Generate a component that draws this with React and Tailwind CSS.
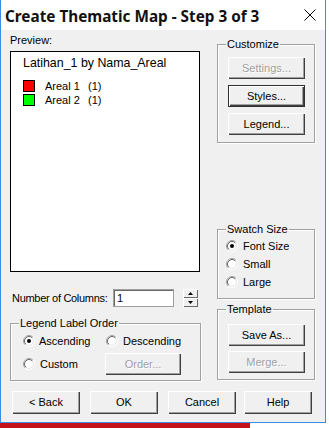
import React from "react";

const btnBase =
  "flex items-center justify-center h-[22px] bg-[#f0f0f0] text-[11px] leading-[13px] shadow-[inset_1px_1px_0_#ffffff,inset_-1px_-1px_0_#404040,inset_-2px_-2px_0_#a0a0a0]";
const disabledText = "text-[#a0a0a0] [text-shadow:1px_1px_0_#ffffff]";

function Btn({ children, disabled, className = "", def }) {
  return (
    <div
      className={`${btnBase} ${def ? "border border-[#303030]" : ""} ${className} ${
        disabled ? disabledText : "text-black"
      }`}
    >
      {children}
    </div>
  );
}

function Radio({ checked }) {
  return (
    <svg width="12" height="12" viewBox="0 0 12 12" className="shrink-0">
      <circle cx="6" cy="6" r="5.5" fill="#ffffff" stroke="#ffffff" />
      <circle cx="6" cy="6" r="4.5" fill="#ffffff" stroke="#e3e3e3" />
      <path d="M2.11 9.89 A5.5 5.5 0 0 1 9.89 2.11" fill="none" stroke="#a0a0a0" />
      <path d="M2.82 9.18 A4.5 4.5 0 0 1 9.18 2.82" fill="none" stroke="#696969" />
      {checked && <circle cx="6" cy="6" r="2" fill="#000000" />}
    </svg>
  );
}

function Group({ label, labelMl = "ml-[8px]", className = "", children }) {
  return (
    <div
      className={`flex flex-col border border-[#a0a0a0] shadow-[inset_1px_1px_0_#ffffff,1px_1px_0_#ffffff] ${className}`}
    >
      <span
        className={`-mt-[7px] ${labelMl} w-fit bg-[#f0f0f0] px-[1px] text-[11px] leading-[13px] text-black`}
      >
        {label}
      </span>
      {children}
    </div>
  );
}

export default function App() {
  return (
    <div className="w-[329px] h-[428px] bg-white font-['Liberation_Sans',Arial,sans-serif] overflow-hidden">
      <div className="w-[326px] h-[423px] flex flex-col border-l border-r border-b border-[#3b8de0]">
        {/* title bar */}
        <div className="h-[30px] bg-white flex items-center pl-[4px] pr-[9px]">
          <span className="font-['Noto_Sans',sans-serif] font-bold text-[15.3px] leading-[20px] text-[#111] mt-[1px]">
            Create Thematic Map - Step 3 of 3
          </span>
          <svg width="12" height="12" viewBox="0 0 12 12" className="ml-auto">
            <path d="M0.5 0.5 L11.5 11.5 M11.5 0.5 L0.5 11.5" stroke="#000" strokeWidth="1" />
          </svg>
        </div>

        {/* body */}
        <div className="flex-1 bg-[#f0f0f0] pl-[9px] flex flex-col">
          <div className="flex">
            {/* left column */}
            <div className="w-[191px] flex flex-col">
              <span className="mt-[4px] h-[13px] text-[11px] leading-[13px] text-black">Preview:</span>
              <div className="mt-[4px] w-[190px] h-[221px] bg-white border border-black flex flex-col">
                <span className="mt-[4px] pl-[12px] text-[12.4px] leading-[15px] text-black">
                  Latihan_1 by Nama_Areal
                </span>
                <div className="mt-[8px] pl-[12px] flex flex-col">
                  {[
                    ["bg-[#ff0000]", "Areal 1"],
                    ["bg-[#00ff00]", "Areal 2"],
                  ].map(([c, t]) => (
                    <div key={t} className="h-[14px] flex items-center text-[11px] leading-[13px] text-black">
                      <div className={`w-[12px] h-[12px] border border-black ${c}`} />
                      <span className="ml-[10px] w-[43px]">{t}</span>
                      <span>(1)</span>
                    </div>
                  ))}
                </div>
              </div>

              {/* number of columns */}
              <div className="mt-[17px] h-[18px] flex items-center">
                <span className="ml-[2px] w-[101px] text-[11px] leading-[13px] tracking-[-0.3px] text-black">
                  Number of Columns:
                </span>
                <div className="w-[61px] h-[18px] bg-white border border-[#a0a0a0] shadow-[inset_1px_1px_0_#696969] flex items-center pl-[3px] text-[11px] leading-[13px] text-black">
                  1
                </div>
                <div className="ml-[9px] w-[15px] h-[18px] flex flex-col">
                  <div className={`h-[9px] ${btnBase} shadow-[inset_1px_1px_0_#ffffff,inset_-1px_-1px_0_#696969]`}>
                    <svg width="5" height="3" viewBox="0 0 5 3">
                      <path d="M2.5 0 L5 3 L0 3 Z" fill="#000" />
                    </svg>
                  </div>
                  <div className={`h-[9px] ${btnBase} shadow-[inset_1px_1px_0_#ffffff,inset_-1px_-1px_0_#696969]`}>
                    <svg width="5" height="3" viewBox="0 0 5 3">
                      <path d="M0 0 L5 0 L2.5 3 Z" fill="#000" />
                    </svg>
                  </div>
                </div>
              </div>

              {/* legend label order */}
              <Group label="Legend Label Order" labelMl="ml-[8px]" className="mt-[16px] w-[191px] h-[58px]">
                <div className="mt-[2px] h-[18px] flex items-center text-[11px] leading-[13px] text-black">
                  <div className="ml-[12px] flex items-center w-[83px]">
                    <Radio checked />
                    <span className="ml-[4px]">Ascending</span>
                  </div>
                  <Radio />
                  <span className="ml-[5px]">Descending</span>
                </div>
                <div className="mt-[3px] h-[22px] flex items-center text-[11px] leading-[13px] text-black">
                  <div className="ml-[12px] flex items-center w-[82px]">
                    <Radio />
                    <span className="ml-[5px]">Custom</span>
                  </div>
                  <Btn disabled className="w-[76px]">Order...</Btn>
                </div>
              </Group>
            </div>

            {/* right column */}
            <div className="ml-[16px] w-[98px] flex flex-col">
              <Group label="Customize" className="mt-[14px] h-[99px]">
                <Btn disabled className="mt-[6px] ml-[10px] w-[77px]">Settings...</Btn>
                <Btn def className="mt-[6px] ml-[10px] w-[77px]">Styles...</Btn>
                <Btn className="mt-[6px] ml-[10px] w-[77px]">Legend...</Btn>
              </Group>

              <Group label="Swatch Size" className="mt-[86px] h-[70px]">
                <div className="mt-[1px] flex flex-col text-[11px] leading-[13px] text-black">
                  {[
                    ["Font Size", true],
                    ["Small", false],
                    ["Large", false],
                  ].map(([t, c]) => (
                    <div key={t} className="h-[18px] flex items-center pl-[8px]">
                      <Radio checked={c} />
                      <span className="ml-[5px]">{t}</span>
                    </div>
                  ))}
                </div>
              </Group>

              <Group label="Template" className="mt-[10px] h-[71px]">
                <Btn className="mt-[8px] ml-[10px] w-[77px]">Save As...</Btn>
                <Btn disabled className="mt-[5px] ml-[10px] w-[77px]">Merge...</Btn>
              </Group>
            </div>
          </div>

          {/* bottom buttons */}
          <div className="mt-[10px] flex">
            <Btn className="ml-[2px] w-[68px] h-[23px]">&lt; Back</Btn>
            <Btn className="ml-[10px] w-[68px] h-[23px]">OK</Btn>
            <Btn className="ml-[10px] w-[68px] h-[23px]">Cancel</Btn>
            <Btn className="ml-[8px] w-[68px] h-[23px]">Help</Btn>
          </div>
        </div>
      </div>
      <div className="w-[250px] h-[5px] bg-[#c4121b]" />
    </div>
  );
}
